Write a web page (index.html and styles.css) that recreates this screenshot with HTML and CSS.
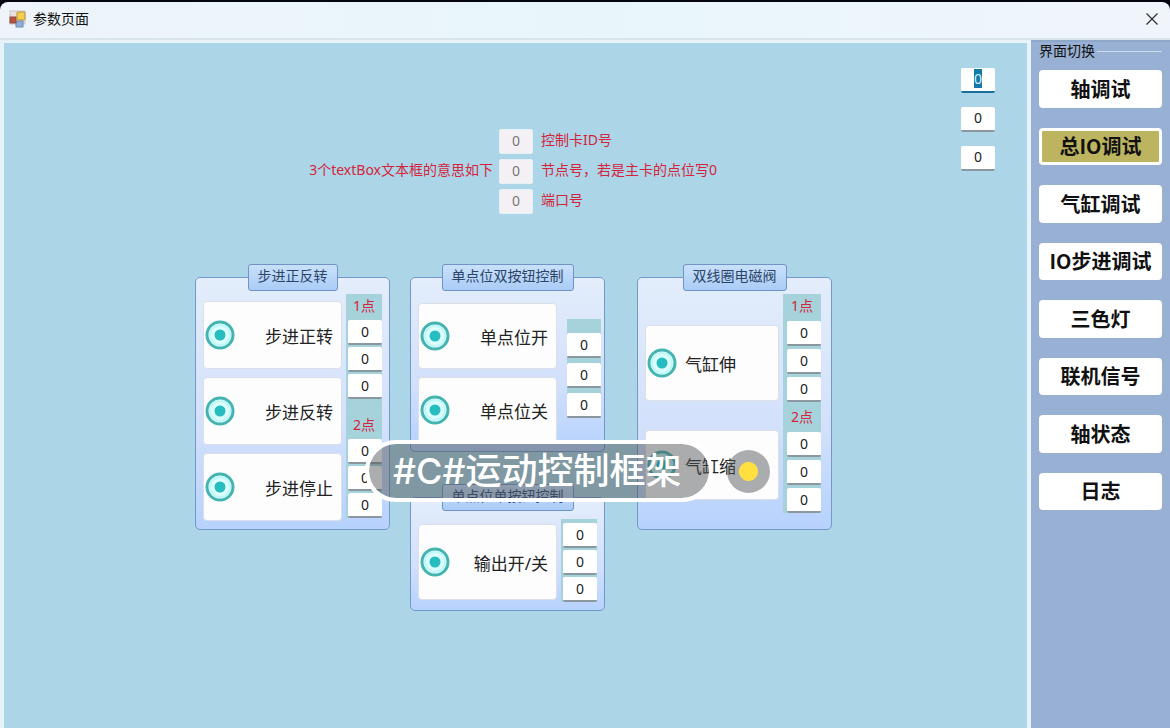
FILE: index.html
```html
<!DOCTYPE html>
<html lang="zh-CN">
<head>
  <meta charset="UTF-8" />
  <meta name="viewport" content="width=device-width, initial-scale=1.0"/>
  <title>参数页面</title>
  <link rel="stylesheet" href="styles.css">
</head>
<body>
  <svg width="0" height="0" class="defs" aria-hidden="true">
    <symbol id="ring" viewBox="0 0 30 30">
      <circle cx="15" cy="15" r="13" fill="#dcffff" stroke="#45b3af" stroke-width="3"/>
      <circle cx="15" cy="15" r="10" fill="none" stroke="#c2f7fa" stroke-width="2"/>
      <circle cx="15" cy="15" r="5.5" fill="#27bcc0"/>
    </symbol>
  </svg>

  <header class="titlebar">
    <svg class="app-icon" viewBox="0 0 18 18" aria-hidden="true">
      <rect x="1" y="1" width="15" height="13" fill="#e9dfe0" stroke="#c9c4c8"/>
      <rect x="7" y="11" width="7" height="6" fill="#8fb0dc" stroke="#7189b5"/>
      <rect x="1" y="7" width="6" height="6" fill="#b9513f" stroke="#8c4a44"/>
      <rect x="8" y="2" width="8" height="8" rx="1" fill="#f4cf4e" stroke="#b9913a"/>
    </svg>
    <h1>参数页面</h1>
    <button class="close-button" aria-label="关闭">
      <svg viewBox="0 0 12 12"><path d="M0.5 0.5 L11.5 11.5 M11.5 0.5 L0.5 11.5"/></svg>
    </button>
  </header>

  <div class="window">
    <main class="stage">
      <div class="work">
        <div class="hint">
          <p class="hint-title">3个textBox文本框的意思如下</p>
          <input id="cardId" value="0" disabled>
          <label for="cardId">控制卡ID号</label>
          <input id="nodeId" value="0" disabled>
          <label for="nodeId">节点号，若是主卡的点位写0</label>
          <input id="portId" value="0" disabled>
          <label for="portId">端口号</label>
        </div>

        <div class="groups">
          <fieldset class="group">
            <legend>步进正反转</legend>
            <div class="actions">
              <button class="action"><svg><use href="#ring"/></svg><span>步进正转</span></button>
              <button class="action"><svg><use href="#ring"/></svg><span>步进反转</span></button>
              <button class="action"><svg><use href="#ring"/></svg><span>步进停止</span></button>
            </div>
            <div class="points">
              <p>1点</p>
              <input value="0" aria-label="1点 控制卡ID号">
              <input value="0" aria-label="1点 节点号">
              <input value="0" aria-label="1点 端口号">
              <p class="second">2点</p>
              <input value="0" aria-label="2点 控制卡ID号">
              <input value="0" aria-label="2点 节点号">
              <input value="0" aria-label="2点 端口号">
            </div>
          </fieldset>

          <div class="group-stack">
            <fieldset class="group double">
              <legend>单点位双按钮控制</legend>
              <div class="actions">
                <button class="action"><svg><use href="#ring"/></svg><span>单点位开</span></button>
                <button class="action"><svg><use href="#ring"/></svg><span>单点位关</span></button>
              </div>
              <div class="points">
                <input value="0" aria-label="控制卡ID号">
                <input value="0" aria-label="节点号">
                <input value="0" aria-label="端口号">
              </div>
            </fieldset>
            <fieldset class="group single">
              <legend>单点位单按钮控制</legend>
              <div class="actions">
                <button class="action"><svg><use href="#ring"/></svg><span>输出开/关</span></button>
              </div>
              <div class="points">
                <input value="0" aria-label="控制卡ID号">
                <input value="0" aria-label="节点号">
                <input value="0" aria-label="端口号">
              </div>
            </fieldset>
          </div>

          <fieldset class="group valve">
            <legend>双线圈电磁阀</legend>
            <div class="actions">
              <button class="action"><svg><use href="#ring"/></svg><span>气缸伸</span></button>
              <button class="action"><svg><use href="#ring"/></svg><span>气缸缩</span></button>
            </div>
            <div class="points">
              <p>1点</p>
              <input value="0" aria-label="1点 控制卡ID号">
              <input value="0" aria-label="1点 节点号">
              <input value="0" aria-label="1点 端口号">
              <p>2点</p>
              <input value="0" aria-label="2点 控制卡ID号">
              <input value="0" aria-label="2点 节点号">
              <input value="0" aria-label="2点 端口号">
            </div>
          </fieldset>
        </div>
      </div>

      <div class="tests">
        <input id="testCard" class="current" value="0" aria-label="控制卡ID号">
        <input value="0" aria-label="节点号">
        <input value="0" aria-label="端口号">
      </div>

      <div class="tag">
        <a href="#">#C#运动控制框架</a>
        <span class="tag-dot"></span>
      </div>
    </main>

    <nav class="sidebar">
      <h2>界面切换</h2>
      <div class="nav-list">
        <button>轴调试</button>
        <button class="active">总IO调试</button>
        <button>气缸调试</button>
        <button>IO步进调试</button>
        <button>三色灯</button>
        <button>联机信号</button>
        <button>轴状态</button>
        <button>日志</button>
      </div>
    </nav>
  </div>

  <script>
    const testCard = document.getElementById("testCard");
    testCard.focus();
    testCard.select();
  </script>
</body>
</html>
```
FILE: styles.css
```css
:root {
  --stage: #acd6e7;
  --side: #98b0d3;
  --points: #a6d2dc;
  --red: #d3243c;
  --text: #222;
}

* {
  box-sizing: border-box;
}

body {
  margin: 0;
  min-height: 100vh;
  display: flex;
  flex-direction: column;
  border-top: 2px solid #05050f;
  background-color: #05050f;
  color: var(--text);
  font-family: "Noto Sans", "Noto Sans CJK SC", sans-serif;
  font-size: 14px;
  line-height: 20px;
}

h1, h2, p {
  margin: 0;
  font-size: 14px;
  font-weight: 400;
}

button, input {
  font-family: inherit;
  color: inherit;
}

button {
  cursor: pointer;
}

.defs {
  position: absolute;
}

.titlebar {
  display: flex;
  align-items: center;
  height: 36px;
  padding: 0 12px 2px 9px;
  gap: 6px;
  border-radius: 8px 8px 0 0;
  background: linear-gradient(90deg, #eef4f9, #e8f6fc 50%, #f0f5fb);
}

.titlebar h1 {
  color: #111;
}

.app-icon {
  width: 18px;
  height: 18px;
}

.close-button {
  margin-left: auto;
  padding: 0;
  border: none;
  background: none;
}

.close-button svg {
  display: block;
  width: 12px;
  height: 12px;
  fill: none;
  stroke: #333;
  stroke-width: 1.3;
}

.window {
  flex: 1;
  display: flex;
  gap: 4px;
  padding-left: 4px;
  border-top: 2px solid #d9e3ea;
  background-color: #e6f3fa;
}

.stage {
  flex: 1;
  position: relative;
  display: flex;
  justify-content: space-between;
  margin-top: 3px;
  padding: 25px 32px 40px 191px;
  background-color: var(--stage);
}

.work {
  padding-top: 61px;
}

input {
  display: block;
  width: 34px;
  height: 25px;
  padding: 0;
  border: none;
  border-bottom: 2px solid #8b979e;
  border-radius: 2px;
  background-color: #fff;
  font-size: 14px;
  text-align: center;
  outline: none;
}

input::selection {
  background-color: #1478a8;
  color: #d8f2ff;
}

/* hint */
.hint {
  display: grid;
  grid-template-columns: 190px 34px auto;
  column-gap: 6px;
  row-gap: 5px;
  justify-content: start;
  margin-left: 108px;
  color: var(--red);
}

.hint-title {
  grid-row: 2;
  justify-self: end;
  line-height: 22px;
  white-space: nowrap;
}

.hint label {
  padding-left: 2px;
  line-height: 22px;
}

.hint input {
  grid-column: 2;
  padding-bottom: 3px;
  border: 1px solid #e3f0f6;
  background-color: #f3f1f4;
  color: #777;
}

/* control groups */
.groups {
  display: grid;
  grid-template-columns: 195px 195px 195px;
  column-gap: 20px;
  align-items: start;
  margin-top: 50px;
}

.group-stack {
  display: grid;
  gap: 32px;
}

.group {
  display: flex;
  gap: 4px;
  min-width: 0;
  height: 266px;
  margin: 0;
  padding: 3px 7px 8px;
  border: 1px solid #7398cc;
  border-radius: 5px;
  background: linear-gradient(#e3edfb, #d2e0fb 60%, #b6d2fd);
}

.group legend {
  height: 27px;
  margin: 0 auto;
  padding: 0 9px;
  border: 1px solid #6f94c8;
  border-radius: 3px;
  background: linear-gradient(#c9e0fb, #aaccf6);
  color: #2b4468;
  line-height: 22px;
}

.actions {
  flex: none;
  width: 139px;
  display: flex;
  flex-direction: column;
  gap: 8px;
  padding-top: 7px;
}

.action {
  display: flex;
  align-items: center;
  gap: 8px;
  height: 68px;
  padding: 0 8px 0 1px;
  border: 1px solid #dcdfe8;
  border-radius: 4px;
  background-color: #fdfdfe;
  font-size: 17px;
}

.action svg {
  width: 30px;
  height: 30px;
}

.action span {
  margin-left: auto;
}

.points {
  display: flex;
  flex-direction: column;
  align-items: flex-end;
  align-self: flex-start;
  gap: 2px;
  width: 36px;
  background-color: var(--points);
}

.points p {
  width: 100%;
  height: 24px;
  line-height: 24px;
  text-align: center;
  color: var(--red);
}

.points .second {
  height: 36px;
  padding-top: 12px;
}

.double {
  height: 188px;
}

.double .actions {
  padding-top: 9px;
}

.double .action {
  height: 66px;
}

.double .points {
  gap: 5px;
  margin-top: 25px;
  margin-left: 6px;
  padding-top: 14px;
}

.single {
  height: 127px;
}

.single .actions {
  padding-top: 10px;
}

.single .action {
  height: 76px;
}

.single .points {
  margin-top: 5px;
  padding-top: 4px;
}

.valve {
  margin-left: 12px;
  width: 195px;
}

.valve .actions {
  width: 134px;
  gap: 29px;
  padding-top: 31px;
}

.valve .action {
  height: 76px;
}

.valve .action:last-child {
  height: 70px;
}

.valve .action span {
  margin-left: 0;
}

.valve .points {
  gap: 3px;
  width: 38px;
}

/* test boxes on the right */
.tests {
  display: flex;
  flex-direction: column;
  gap: 14px;
}

.tests input {
  padding-bottom: 3px;
}

.tests .current {
  border-bottom-color: #1a6f9c;
}

/* topic tag over the canvas */
.tag {
  position: absolute;
  top: 397px;
  left: 361px;
  display: flex;
  align-items: center;
  gap: 14px;
}

.tag a {
  padding: 0 28px 0 24px;
  border: 4px solid #fff;
  border-radius: 31px;
  background-color: rgba(80, 84, 88, 0.48);
  background-clip: padding-box;
  color: #fff;
  font-family: Inter, "Noto Sans CJK SC", sans-serif;
  font-size: 36px;
  font-weight: 500;
  line-height: 54px;
  text-decoration: none;
  white-space: nowrap;
}

.tag-dot {
  width: 43px;
  height: 43px;
  border-radius: 50%;
  background: radial-gradient(circle, #ffe040 9px, rgba(80, 84, 88, 0.48) 10px);
}

/* sidebar */
.sidebar {
  width: 139px;
  padding: 0 8px;
  border-top: 2px solid #8ea6c8;
  background-color: var(--side);
}

.sidebar h2 {
  display: flex;
  align-items: center;
  gap: 2px;
  color: #111;
  line-height: 18px;
  white-space: nowrap;
}

.sidebar h2::after {
  content: "";
  flex: 1;
  height: 1px;
  background-color: #cfdcec;
}

.nav-list {
  display: grid;
  grid-auto-rows: 1fr;
  gap: 20px;
  height: 440px;
  margin-top: 10px;
}

.nav-list button {
  padding: 0;
  border: 3px solid #fff;
  border-radius: 4px;
  background-color: #fff;
  color: #111;
  font-family: "Noto Sans CJK SC", sans-serif;
  font-size: 20px;
  font-weight: 700;
  line-height: 28px;
}

.nav-list .active {
  background-color: #bcb45f;
}
```
